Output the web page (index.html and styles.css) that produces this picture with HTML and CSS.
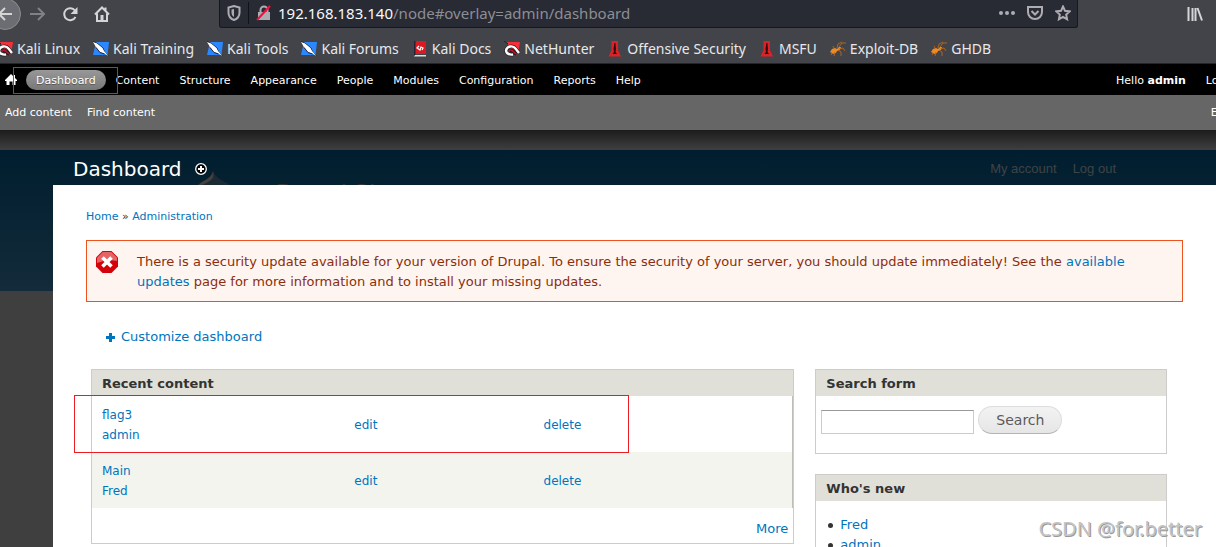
FILE: index.html
```html
<!DOCTYPE html>
<html lang="en">

<head>
    <meta charset="UTF-8">
    <meta name="viewport" content="width=device-width, initial-scale=1.0">
    <title>Dashboard</title>
    <link rel="stylesheet" href="styles.css">
</head>

<body>
    <!-- icons used more than once -->
    <svg class="defs" width="0" height="0" aria-hidden="true">
        <symbol id="dragon" viewBox="0 0 16 16">
            <path d="M3 1h13l-2 12-3 1L4 3z" fill="#f5303a"/>
            <path d="M0 0l4 3" stroke="#222" stroke-width="1"/>
            <path d="M2 9.500C3 5 9 4 11.500 7.500L15 12M2 9c0 4 4 5 7 4.500M5.500 10c3-2 4 1.500 7 3" fill="none" stroke="#241a1e" stroke-width="3.600"/>
            <path d="M2 9.500C3 5 9 4 11.500 7.500L15 12M2 9c0 4 4 5 7 4.500" fill="none" stroke="#fff" stroke-width="2.400"/>
            <path d="M5 9.500c3-2 4 1.500 7 3.500" fill="none" stroke="#c9142a" stroke-width="1.400"/>
        </symbol>
        <symbol id="knife" viewBox="0 0 16 16">
            <path d="M0 14L3 1h13l-1.500 13z" fill="#2b87ff"/>
            <path d="M0 0l5 3 5 4 1.500 4L16 15" fill="none" stroke="#26282c" stroke-width="1"/>
            <path d="M0 1l4 1.500L9.500 7l1.500 3 4.500 5-4-2.500L7 11 3 6z" fill="#fff"/>
            <path d="M3 6.500L7 11.500l4.500 1.500" fill="none" stroke="#26282c" stroke-width="1"/>
        </symbol>
        <symbol id="tower" viewBox="0 0 16 16">
            <path d="M4.500 0h6.500v9l3 6.500H1.500l3-6.500z" fill="#dc2226"/>
            <path d="M7.400 2h1l.6 6-.5 3 1.500 2H5.500L7 11l-.5-3z" fill="#35080c"/>
        </symbol>
        <symbol id="ant" viewBox="0 0 16 16">
            <path d="M0 11l2-3 3-1 2 1 2-2h2l-1 3-3 1-1 2-3 1-1-1z" fill="#f08a20"/>
            <path d="M7 7l1-4 4-2M9 6l3-4 4 0M9 8l4-1 2 3M8 9l3 2v4M4 7L3 5M5 11l-1 4M2 12l-1 2" fill="none" stroke="#b8691c" stroke-width=".9"/>
        </symbol>
    </svg>

    <header class="browser">
        <div class="nav">
            <button class="back" aria-label="Back"><svg width="16" height="16" viewBox="0 0 16 16"><path d="M15 8H2M8 2L2 8l6 6"/></svg></button>
            <button aria-label="Forward" class="off"><svg width="16" height="16" viewBox="0 0 16 16"><path d="M0 8h14M8 2l6 6-6 6"/></svg></button>
            <button aria-label="Reload"><svg width="16" height="16" viewBox="0 0 16 16"><path d="M13 4.500A6 6 0 1 0 13.500 11"/><path d="M15.500 1v7h-7z" class="solid"/></svg></button>
            <button aria-label="Home"><svg width="16" height="16" viewBox="0 0 16 16"><path d="M1 8.500L8 1.500l7 7M3 7.500V15h10V7.500M11.500 1.500v3"/><path d="M6.500 9h3v5h-3z" class="solid"/></svg></button>
            <div class="urlbar">
                <svg width="14" height="16" viewBox="0 0 14 16"><path d="M7 1L1.500 2.500v5C1.500 11 4 14 7 15c3-1 5.500-4 5.500-7.500v-5z"/><path d="M7 4v8c-1.500-1-2.500-2.500-2.500-4.500v-3z" class="solid"/></svg>
                <i class="line"></i>
                <svg width="16" height="16" viewBox="0 0 16 16"><path d="M2 7h12v8H2z" class="solid"/><path d="M4.500 7V5a3.500 3.500 0 0 1 7 0v2"/><path d="M1 15L14 1" class="strike"/></svg>
                <span class="address" role="textbox" aria-label="Address">192.168.183.140<span>/node#overlay=admin/dashboard</span></span>
                <svg width="16" height="16" viewBox="0 0 16 16" class="more-dots"><circle cx="2" cy="8" r="2"/><circle cx="8" cy="8" r="2"/><circle cx="14" cy="8" r="2"/></svg>
                <svg width="16" height="16" viewBox="0 0 16 16"><path d="M1 2h14v5c0 4-3 7-7 7s-7-3-7-7z"/><path d="M4.500 6L8 9.500 11.500 6"/></svg>
                <svg width="16" height="16" viewBox="0 0 16 16"><path d="M8 1.500l2 4.300 4.700.6-3.500 3.200.9 4.700L8 12l-4.100 2.300.9-4.700L1.300 6.400 6 5.800z"/></svg>
            </div>
            <button class="library" aria-label="Library"><svg width="16" height="16" viewBox="0 0 16 16"><path d="M1.500 1v14M5.500 2v13M8.500 2v13M10.500 2L15 14.500"/></svg></button>
        </div>
        <nav class="bookmarks">
            <a href="#"><svg width="16" height="16"><use href="#dragon"/></svg>Kali Linux</a>
            <a href="#"><svg width="16" height="16"><use href="#knife"/></svg>Kali Training</a>
            <a href="#"><svg width="16" height="16"><use href="#knife"/></svg>Kali Tools</a>
            <a href="#"><svg width="16" height="16"><use href="#knife"/></svg>Kali Forums</a>
            <a href="#"><svg width="16" height="16" viewBox="0 0 16 16"><path d="M2 0h12v13H2z" fill="#dc1820"/><path d="M2 0h1.500v15H2z" fill="#272238"/><path d="M3 14h11v1.500H2z" fill="#ddd"/><path d="M7 5L5 7l3 2 1-3 2 1-1 2" fill="none" stroke="#fff" stroke-width="1.200"/></svg>Kali Docs</a>
            <a href="#"><svg width="16" height="16"><use href="#dragon"/></svg>NetHunter</a>
            <a href="#"><svg width="16" height="16"><use href="#tower"/></svg>Offensive Security</a>
            <a href="#"><svg width="16" height="16"><use href="#tower"/></svg>MSFU</a>
            <a href="#"><svg width="16" height="16"><use href="#ant"/></svg>Exploit-DB</a>
            <a href="#"><svg width="16" height="16"><use href="#ant"/></svg>GHDB</a>
        </nav>
    </header>

    <div class="toolbar">
        <nav class="menu">
            <a href="#" class="home" aria-label="Home"><svg width="12" height="11" viewBox="0 0 12 11"><path d="M6 0l2 2V1h2v3l2 2v1h-1.500v4h-3V7.500h-3V11h-3V7H0V6z"/></svg></a>
            <a href="#" class="active">Dashboard</a>
            <a href="#">Content</a>
            <a href="#">Structure</a>
            <a href="#">Appearance</a>
            <a href="#">People</a>
            <a href="#">Modules</a>
            <a href="#">Configuration</a>
            <a href="#">Reports</a>
            <a href="#">Help</a>
        </nav>
        <nav class="user">
            <a href="#">Hello <strong>admin</strong></a>
            <a href="#">Log out</a>
        </nav>
    </div>
    <div class="shortcuts">
        <a href="#">Add content</a>
        <a href="#">Find content</a>
        <a href="#" class="edit">Edit shortcuts</a>
    </div>

    <div class="stage">
        <!-- the site below the overlay -->
        <div class="site">
            <svg width="46" height="60" viewBox="0 0 46 60"><path d="M23 0c3 7 8 9 14 12 6 4 9 10 9 18a23 23 0 0 1-46 0c0-8 4-14 10-18 6-4 11-6 13-12z" fill="#1c2a33"/><path d="M23 0c1 7 0 8-5 11-4 3-8 3-12 6 2-3 4-5 8-7 5-3 8-5 9-10z" fill="#444040"/></svg>
            <span class="name">Drupal Site</span>
            <div class="account"><a href="#">My account</a><a href="#">Log out</a></div>
        </div>

        <div class="overlay">
            <div class="title">
                <h1>Dashboard</h1>
                <a href="#" aria-label="Add to shortcuts"><svg width="12" height="12" viewBox="0 0 12 12"><circle cx="6" cy="6" r="5.300" fill="#000" stroke="#fff" stroke-width="1.300"/><path d="M6 3v6M3 6h6" stroke="#fff" stroke-width="2"/></svg></a>
            </div>
            <main>
                <div class="breadcrumb"><a href="#">Home</a> » <a href="#">Administration</a></div>
                <div class="message">
                    <svg width="22" height="22" viewBox="0 0 22 22"><path d="M6.500 0h9L22 6.500v9L15.500 22h-9L0 15.500v-9z" fill="#d3030a"/><path d="M6.800 1h8.400L21 6.800V10Q11 8 1 12V6.800z" fill="#e66366"/><path d="M6.500 6.500l9 9M15.500 6.500l-9 9" stroke="#fff" stroke-width="3.600"/></svg>
                    <p>There is a security update available for your version of Drupal. To ensure the security of your server, you should update immediately! See the <a href="#">available updates</a> page for more information and to install your missing updates.</p>
                </div>
                <a href="#" class="customize"><svg width="9" height="9" viewBox="0 0 9 9"><path d="M3 0h3v3h3v3H6v3H3V6H0V3h3z"/></svg>Customize dashboard</a>

                <div class="dashboard">
                    <div class="column wide">
                        <section class="block">
                            <h2>Recent content</h2>
                            <table>
                                <tr>
                                    <td class="node"><a href="#">flag3</a><br><a href="#">admin</a></td>
                                    <td class="op"><a href="#">edit</a></td>
                                    <td><a href="#">delete</a></td>
                                </tr>
                                <tr>
                                    <td class="node"><a href="#">Main</a><br><a href="#">Fred</a></td>
                                    <td class="op"><a href="#">edit</a></td>
                                    <td><a href="#">delete</a></td>
                                </tr>
                            </table>
                            <div class="more"><a href="#">More</a></div>
                        </section>
                    </div>
                    <div class="column">
                        <section class="block">
                            <h2>Search form</h2>
                            <form class="search">
                                <input type="text" aria-label="Search">
                                <button type="button">Search</button>
                            </form>
                        </section>
                        <section class="block">
                            <h2>Who's new</h2>
                            <ul>
                                <li><a href="#">Fred</a></li>
                                <li><a href="#">admin</a></li>
                            </ul>
                        </section>
                    </div>
                </div>
            </main>
        </div>
    </div>

    <div class="mark mark-menu"></div>
    <div class="mark mark-row"></div>
    <div class="watermark">CSDN @for.better</div>
</body>

</html>
```
FILE: styles.css
```css
* {
    margin: 0;
    padding: 0;
    box-sizing: border-box;
}

html,
body {
    height: 100%;
    overflow: hidden;
}

body {
    position: relative;
    font: 13px/20px "DejaVu Sans", sans-serif;
    color: #333;
    background-color: #403f3f;
}

a {
    color: #0074bd;
    text-decoration: none;
}

svg {
    display: block;
    flex: none;
}

.defs {
    position: absolute;
}

/* browser */
.browser {
    font: 14px/20px "Noto Sans", sans-serif;
    background-color: #42444a;
    border-bottom: 1px solid #25262b;
}

.nav {
    display: flex;
    align-items: center;
    height: 28px;
    padding-bottom: 1px;
}

.nav svg {
    fill: none;
    stroke: #d5d5d5;
    stroke-width: 2;
}

.nav .solid {
    fill: #d5d5d5;
    stroke: none;
}

.nav button {
    width: 32px;
    height: 32px;
    display: flex;
    align-items: center;
    justify-content: center;
    flex: none;
    background: none;
    border: none;
}

.nav .back {
    margin-left: -11px;
    border-radius: 50%;
    border: 1px solid #8b8c90;
    background-color: #6c6d72;
}

.nav .off {
    margin-left: 1px;
}

.nav .off svg {
    stroke: #808186;
}

.urlbar {
    flex: 1;
    display: flex;
    align-items: center;
    gap: 12px;
    height: 28px;
    margin-left: 101px;
    padding: 0 6px 0 7px;
    font-size: 15px;
    color: #f9f9fa;
    background-color: #282a34;
    border: 1px solid #17181e;
    border-top: none;
    border-radius: 0 0 3px 3px;
}

.nav .urlbar svg {
    stroke: #adadb1;
}

.nav .urlbar .solid {
    fill: #adadb1;
}

.nav .urlbar .strike {
    stroke: #ef1240;
}

.nav .urlbar .more-dots {
    fill: #adadb1;
    stroke: none;
}

.line {
    width: 1px;
    height: 22px;
    margin: 0 -5px;
    background-color: #111218;
}

.address {
    flex: 1;
    margin-left: -6px;
    white-space: nowrap;
}

.address span {
    color: #8d8e94;
}

.nav .library {
    margin-left: 101px;
    margin-right: 5px;
}

.bookmarks {
    display: flex;
    gap: 13px;
    padding: 11px 0 4px;
    margin-left: -3px;
}

.bookmarks a {
    display: flex;
    align-items: center;
    gap: 4px;
    color: #e8e8ea;
    white-space: nowrap;
}

/* drupal toolbar */
.toolbar,
.shortcuts {
    display: flex;
    font-size: 11px;
    white-space: nowrap;
}

.toolbar {
    justify-content: space-between;
    height: 31px;
    align-items: center;
    line-height: 18px;
    background-color: #000;
}

.toolbar a,
.shortcuts a {
    color: #fff;
}

.menu,
.user {
    display: flex;
}

.menu a,
.user a {
    padding: 2px 10px 0;
}

.menu .home {
    display: flex;
    align-items: center;
    padding: 0 9px 0 5px;
    fill: #fff;
}

.menu .active {
    border-radius: 10px;
    background: linear-gradient(#989898, #787878);
    text-shadow: 0 1px 0 #555;
}

.user {
    margin-right: -41px;
}

.shortcuts {
    gap: 15px;
    padding: 8px 5px 7px;
    background-color: #666;
}

.shortcuts .edit {
    margin-left: auto;
    margin-right: -76px;
}

/* site and overlay share one grid cell */
.stage {
    display: grid;
    grid-template-columns: minmax(0, 1fr);
    padding-top: 20px;
    background: linear-gradient(#1c1c1c, #403f3f 20px);
}

.site,
.overlay {
    grid-area: 1 / 1;
}

.site {
    display: flex;
    align-items: flex-start;
    height: 141px;
    padding: 21px 100px 0 190px;
    background: linear-gradient(#001e2f, #132b3a);
}

.site .name {
    margin: 7px 0 0 40px;
    font: 24px/30px "Liberation Sans", sans-serif;
    color: #393636;
}

.account {
    display: flex;
    gap: 16px;
    margin: -12px 0 0 auto;
    font: 13px/20px "Liberation Sans", sans-serif;
}

.account a {
    color: #404345;
}

.overlay {
    margin-left: 53px;
}

.title {
    display: flex;
    align-items: center;
    gap: 13px;
    height: 35px;
    padding: 3px 20px 0;
}

.title h1 {
    font-size: 20px;
    font-weight: normal;
    color: #fff;
}

main {
    min-height: 400px;
    padding: 22px 33px;
    background-color: #fff;
}

.breadcrumb {
    font-size: 11px;
}

.message {
    display: flex;
    gap: 19px;
    margin: 13px 0 25px;
    padding: 10px 35px 9px 9px;
    color: #8c2e0b;
    background-color: #fef5f1;
    border: 1px solid #ed541d;
}

.message p {
    padding-top: 1px;
}

.customize {
    display: flex;
    align-items: center;
    gap: 6px;
    margin-left: 20px;
    fill: #0074bd;
}

.dashboard {
    display: flex;
    align-items: flex-start;
    gap: 21px;
    margin: 22px 16px 0 5px;
}

.column {
    flex: 1;
}

.column.wide {
    flex: 2;
}

.block {
    margin-bottom: 20px;
    border: 1px solid #ccc;
}

.block h2 {
    padding: 4px 10px 2px;
    font-size: 13px;
    line-height: 20px;
    background-color: #e0e0d8;
}

table {
    width: 100%;
    border-collapse: collapse;
    font-size: 12px;
    border-right: 1px solid #bebfb9;
}

td {
    padding: 9px 10px 7px;
}

tr:nth-child(even) {
    background-color: #f3f4ee;
}

.node {
    width: 36%;
}

.op {
    width: 27%;
}

.more {
    padding: 11px 5px 4px;
    text-align: right;
}

.search {
    display: flex;
    align-items: flex-end;
    gap: 4px;
    padding: 10px 5px 19px;
}

.search input {
    width: 153px;
    height: 24px;
    padding: 2px;
    border: 1px solid #ccc;
    border-top-color: #999;
}

.search button {
    height: 28px;
    padding: 0 17px;
    font: 14px/20px "DejaVu Sans", sans-serif;
    color: #5a5a5a;
    background: linear-gradient(#f3f3f3, #e6e6e6);
    border: 1px solid #ddd;
    border-bottom-color: #b4b4b4;
    border-radius: 14px;
}

.block ul {
    padding: 14px 12px 12px;
    list-style: none;
}

.block li {
    display: flex;
    align-items: center;
    gap: 7px;
}

.block li::before {
    content: "";
    width: 5px;
    height: 5px;
    border-radius: 50%;
    background-color: #333;
}

/* red frames */
.mark {
    position: absolute;
    border: 1px solid #ed1c24;
}

.mark-menu {
    left: 13px;
    top: 67px;
    width: 105px;
    height: 27px;
}

.mark-row {
    left: 74px;
    top: 395px;
    width: 555px;
    height: 58px;
}

.watermark {
    position: absolute;
    right: 14px;
    bottom: 4px;
    font: 20px/28px "Noto Sans", sans-serif;
    color: #c4c4c4;
    text-shadow: 1px 1px 0 #999;
}
```
